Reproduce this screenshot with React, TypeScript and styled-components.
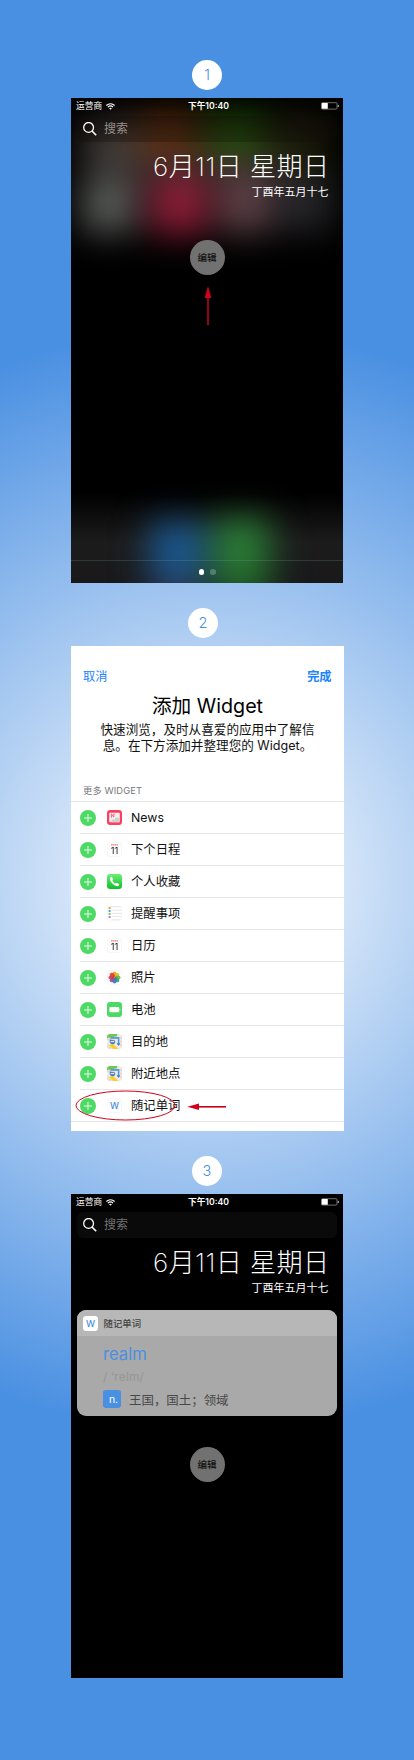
import React from "react";
import styled, { createGlobalStyle } from "styled-components";

const Global = createGlobalStyle`
  html, body { margin: 0; padding: 0; }
  body { font-family: Inter, "Noto Sans CJK SC", sans-serif; }
  * { box-sizing: border-box; }
  svg { display: block; }
`;

const Page = styled.main`
  width: 414px;
  height: 1760px;
  padding: 60px 0 0 71px;
  display: flex;
  flex-direction: column;
  align-items: flex-start;
  background: radial-gradient(circle 553px at 207px 880px, #fff 0, #4a90e2 100%);
`;

const Step = styled.div<{ $top?: number; $left?: number }>`
  width: 30px;
  height: 30px;
  flex: none;
  margin: ${(p) => p.$top ?? 0}px 0 8px ${(p) => p.$left ?? 121}px;
  border-radius: 50%;
  background: #fff;
  color: #4a90e2;
  font-size: 14.5px;
  font-weight: 300;
  line-height: 30px;
  text-align: center;
`;

const Phone = styled.section<{ $h?: number }>`
  position: relative;
  isolation: isolate;
  width: 272px;
  height: ${(p) => p.$h ?? 485}px;
  flex: none;
  display: flex;
  flex-direction: column;
  overflow: hidden;
  color: #fff;
  background: #000;
`;

const GlowLayer = styled.svg`
  position: absolute;
  inset: 0;
  z-index: -1;
`;

const StatusBar = styled.div`
  height: 18px;
  padding: 0 4px 2px 5px;
  display: grid;
  grid-template-columns: 1fr auto 1fr;
  align-items: center;
  font-size: 8.7px;
  line-height: 16px;
`;
const Carrier = styled.div`
  display: flex;
  align-items: center;
  gap: 4px;
`;
const Clock = styled.div`
  font-weight: 600;
  padding-left: 2px;
`;
const BatteryBox = styled.div`
  display: flex;
  justify-content: flex-end;
`;

const Search = styled.div<{ $clear?: boolean }>`
  height: 26px;
  margin: 0 6px;
  padding: 0 6px;
  border-radius: 6px;
  display: flex;
  align-items: center;
  gap: 7px;
  font-size: 12px;
  color: ${(p) => (p.$clear ? "#96908c" : "#727272")};
  background: ${(p) => (p.$clear ? "rgba(20,12,10,.3)" : "#0a0a0a")};
`;
const Placeholder = styled.span`
  line-height: 26px;
  height: 26px;
`;

const DateLine = styled.h1`
  margin: 7px 13.5px 0 0;
  height: 36px;
  line-height: 36px;
  text-align: right;
  font-size: 26.1px;
  letter-spacing: 0.4px;
  font-weight: 200;
  white-space: nowrap;
`;
const Lunar = styled.p`
  margin: -1px 14.5px 0 0;
  height: 16px;
  line-height: 17px;
  text-align: right;
  font-size: 11px;
`;

const Edit = styled.button<{ $top: number }>`
  width: 35px;
  height: 35px;
  flex: none;
  margin: ${(p) => p.$top}px 0 0 118.5px;
  padding: 0;
  border: 0;
  border-radius: 50%;
  background: #717171;
  color: #101010;
  font: 500 9.5px/34px Inter, "Noto Sans CJK SC", sans-serif;
`;
const UpArrow = styled.svg`
  flex: none;
  margin: 11px 0 0 133px;
`;
const Footer = styled.div`
  height: 23.5px;
  margin-top: auto;
  border-top: 1px solid rgba(140, 180, 170, 0.2);
  display: flex;
  justify-content: center;
  align-items: center;
  gap: 6px;
`;
const Dot = styled.i<{ $on?: boolean }>`
  width: 5.5px;
  height: 5.5px;
  border-radius: 50%;
  background: ${(p) => (p.$on ? "#fff" : "rgba(160,190,170,.4)")};
`;

const Sheet = styled.section`
  width: 273px;
  height: 485px;
  flex: none;
  overflow: hidden;
  background: #fff;
  color: #111;
`;
const Nav = styled.div`
  height: 44px;
  padding: 18px 12.5px 0 12px;
  display: flex;
  justify-content: space-between;
  line-height: 26px;
  font-size: 12.2px;
  color: #1a84fb;
`;
const Done = styled.span`
  font-weight: 600;
`;
const Title = styled.h2`
  margin: 0;
  height: 32px;
  line-height: 32px;
  font-size: 19.7px;
  font-weight: 400;
  text-align: center;
  color: #000;
`;
const Intro = styled.p`
  margin: 0;
  height: 60px;
  line-height: 16px;
  font-size: 12.6px;
  text-align: center;
  white-space: nowrap;
`;
const GroupName = styled.div`
  height: 20px;
  padding-left: 12px;
  line-height: 18px;
  font-size: 9.3px;
  letter-spacing: 0.1px;
  color: #77777b;
  border-bottom: 1px solid #e6e6e8;
`;
const List = styled.ul`
  list-style: none;
  margin: 0;
  padding: 0;
  border-bottom: 1px solid #e6e6e8;
`;
const Row = styled.li`
  height: 32px;
  margin-left: 9px;
  display: flex;
  align-items: center;
  border-bottom: 1px solid #e6e6e8;
  font-size: 12.35px;
  position: relative;
  &:last-child { border-bottom: 0; height: 31px; }
`;
const Plus = styled.svg`
  margin: 1px 11px 0 0;
`;
const RowIcon = styled.svg`
  margin-right: 9px;
`;
const Label = styled.span`
  line-height: 31px;
  height: 31px;
`;
const Mark = styled.svg`
  position: absolute;
  left: -5px;
  top: -1px;
  overflow: visible;
`;

const Card = styled.article`
  margin: 14px 6px 0;
  height: 106px;
  flex: none;
  overflow: hidden;
  border-radius: 9px;
  background: #a9a9a9;
`;
const CardHead = styled.header`
  height: 26px;
  padding-left: 6px;
  display: flex;
  align-items: center;
  gap: 5.5px;
  background: #b7b7b7;
  color: #444;
  font-size: 9.4px;
  font-weight: 500;
`;
const CardBody = styled.div`
  padding: 6px 0 0 26px;
`;
const Word = styled.div`
  height: 23px;
  line-height: 24px;
  font-size: 16.6px;
  color: #4a90e2;
`;
const Phonetic = styled.div`
  height: 25px;
  line-height: 24px;
  font-size: 12px;
  letter-spacing: 0.15px;
  color: #969696;
`;
const Meaning = styled.div`
  display: flex;
  align-items: center;
  gap: 8px;
  height: 18px;
  font-size: 12.45px;
  color: #484848;
`;
const Gloss = styled.span`
  height: 18px;
  line-height: 21px;
`;
const Pos = styled.span`
  width: 18px;
  height: 18px;
  padding-left: 3px;
  border-radius: 3px;
  background: #4a90e2;
  color: #fff;
  font-size: 10.5px;
  line-height: 19px;
  text-align: center;
`;

const Glow = () => (
  <GlowLayer width="272" height="485" viewBox="0 0 272 485">
    <defs>
      <filter
        id="soft"
        filterUnits="userSpaceOnUse"
        x="-80"
        y="-80"
        width="432"
        height="645"
        colorInterpolationFilters="sRGB"
      >
        <feGaussianBlur stdDeviation="18 17" />
      </filter>
      <linearGradient id="dock" x2="0" y2="1">
        <stop stopColor="#1c1c1c" stopOpacity="0" />
        <stop offset=".55" stopColor="#1c1c1c" />
        <stop offset="1" stopColor="#19191b" />
      </linearGradient>
    </defs>
    <rect y="395" width="272" height="90" fill="url(#dock)" />
    <g filter="url(#soft)">
      <rect x="14" y="26" width="54" height="44" fill="#48423f" />
      <rect x="68" y="18" width="60" height="36" fill="#65300c" />
      <rect x="134" y="18" width="62" height="36" fill="#205408" />
      <rect x="204" y="18" width="52" height="62" fill="#1c1c0a" />
      <rect x="60" y="54" width="150" height="28" fill="#3a2c29" />
      <rect x="12" y="78" width="52" height="56" fill="#5c5f5c" />
      <rect x="80" y="78" width="56" height="58" fill="#901e38" />
      <rect x="148" y="78" width="52" height="56" fill="#61444a" />
      <rect x="208" y="78" width="52" height="54" fill="#28282d" />
      <rect x="80" y="424" width="52" height="58" fill="#1a5a94" />
      <rect x="142" y="420" width="56" height="62" fill="#2a7e36" />
      <rect x="80" y="484" width="52" height="30" fill="#323956" />
      <rect x="142" y="482" width="56" height="30" fill="#1d4f21" />
    </g>
  </GlowLayer>
);

const Tile = ({ kind }: { kind: string }) => (
  <RowIcon width="15" height="15" viewBox="0 0 15 15">
    {kind === "news" && (
      <>
        <rect width="15" height="15" rx="3.2" fill="#fb3f5c" />
        <rect x="2.2" y="2.8" width="10.6" height="9.4" rx=".8" fill="#f6eef0" />
        <path d="M8 7.8H12.8V11.4a.8.8 0 0 1-.8.8H4.5V9.6H8Z" fill="#d2cdcf" />
        <path d="M4.6 7V4.2L6.9 7V4.2M4 4.2H4.8M6.4 4.2H7.5M4 7H5.1" stroke="#fb3f5c" strokeWidth=".75" fill="none" />
      </>
    )}
    {kind === "calendar" && (
      <>
        <rect x=".3" y=".3" width="14.4" height="14.4" rx="3.2" fill="#fff" stroke="#eee" strokeWidth=".6" />
        <path d="M4 2.8H11" stroke="#f27b74" strokeWidth="1.3" strokeDasharray="1.5 .3" />
        <text x="7.5" y="11.9" textAnchor="middle" fontSize="9.2" fill="#222">11</text>
      </>
    )}
    {kind === "phone" && (
      <>
        <defs>
          <linearGradient id="call" x2="0" y2="1">
            <stop stopColor="#6cf077" />
            <stop offset="1" stopColor="#0fbe2a" />
          </linearGradient>
        </defs>
        <rect width="15" height="15" rx="3.2" fill="url(#call)" />
        <path d="M3.2 3.6C3.8 2.7 4.6 2.5 5 3.1L6.1 4.9C6.4 5.4 5.5 6 5.5 6.4 5.6 7.4 7.6 9.5 8.7 9.6 9.2 9.6 9.7 8.7 10.2 9L12 10.1C12.6 10.6 12.1 11.5 11.2 12 7.8 13.3 1.9 7.2 3.2 3.6Z" fill="#fff" />
      </>
    )}
    {kind === "reminders" && (
      <>
        <rect x=".3" y=".3" width="14.4" height="14.4" rx="3.2" fill="#fff" stroke="#f1f1f1" strokeWidth=".6" />
        <path d="M4.8 .8H14M4.8 4.2H14.6M4.8 7.4H14.6M4.8 10.6H14.6M4.8 13.8H13.5" stroke="#ddd" strokeWidth=".7" />
        <rect x="1.6" y="1" width="2" height="2" fill="#f7992e" />
        <rect x="1.6" y="4" width="2" height="2" fill="#3fa6f2" />
        <rect x="1.6" y="7" width="2" height="2" fill="#6bd35d" />
        <rect x="1.6" y="10" width="2" height="2" fill="#c078e0" />
      </>
    )}
    {kind === "photos" && (
      <>
        <rect x=".3" y=".3" width="14.4" height="14.4" rx="3.2" fill="#fff" stroke="#eee" strokeWidth=".6" />
        {["#f5931c", "#cfca25", "#6fb53a", "#2f9c80", "#3a76c0", "#7f58aa", "#c93c5e", "#ea3626"].map((c, i) => (
          <ellipse key={c} cx="7.5" cy="4.4" rx="2.1" ry="2.9" fill={c} opacity=".9" transform={`rotate(${i * 45} 7.5 7.5)`} />
        ))}
      </>
    )}
    {kind === "battery" && (
      <>
        <rect width="15" height="15" rx="3" fill="#4cd964" />
        <rect x="2.4" y="4.9" width="9.8" height="5.3" rx=".8" fill="#fff" />
        <path d="M12.6 6.5a1.1 1.1 0 0 1 0 2.1Z" fill="#fff" />
      </>
    )}
    {kind === "maps" && (
      <>
        <rect width="15" height="15" rx="3.2" fill="#f1ebdf" />
        <path d="M3.2 0H10.2V2.2L0 4V3.2A3.2 3.2 0 0 1 3.2 0Z" fill="#74c54a" />
        <path d="M0 4.8 10.3 3.4V4.6L0 6Z" fill="#ded8cc" />
        <path d="M0 9.5 9.5 15H3.2A3.2 3.2 0 0 1 0 11.8Z" fill="#e9dfc5" />
        <path d="M3.6 10.2 6 9.8 11.3 15H6L2.6 11.6Z" fill="#fbcd30" />
        <path d="M2.6 5.4 8 6.4 8.2 8.8C7.4 10.6 3.8 10.6 2.8 8.6Z" fill="#287fe0" />
        <path d="M3.5 7.7H7.3" stroke="#fff" strokeWidth="1" />
        <path d="M3.6 6.3H7.2" stroke="#e95c5c" strokeWidth=".7" />
        <path d="M3.2 3.9H11.6V11" stroke="#469cf5" strokeWidth="1.6" fill="none" />
        <path d="M9.8 9.2 11.6 12 13.2 9.2Z" fill="#2c7ad8" />
        <path d="M14 3V13" stroke="#f3b5ad" strokeWidth=".9" strokeDasharray="2 1.6" />
      </>
    )}
    {kind === "word" && (
      <>
        <rect x=".3" y=".3" width="14.4" height="14.4" rx="3.2" fill="#fff" stroke="#eee" strokeWidth=".6" />
        <text x="7.5" y="10.6" textAnchor="middle" fontSize="9" fontWeight="500" fill="#4a90e2">W</text>
      </>
    )}
  </RowIcon>
);

const WordLogo = () => (
  <svg width="15" height="15" viewBox="0 0 15 15">
    <rect width="15" height="15" rx="3.2" fill="#fff" />
    <text x="7.5" y="10.7" textAnchor="middle" fontSize="9" fontWeight="500" fill="#4a90e2">W</text>
  </svg>
);

const Lockscreen = ({ glow }: { glow?: boolean }) => (
  <>
    {glow && <Glow />}
    <StatusBar>
      <Carrier>
        运营商
        <svg width="9" height="7" viewBox="0 0 9 7" fill="none" stroke="#fff" strokeWidth="1.15">
          <path d="M.4 2.5C2.7.2 6.3.2 8.6 2.5M1.9 4.1C3.4 2.7 5.6 2.7 7.1 4.1" />
          <path d="M4.5 6.7 3.1 5.3C3.9 4.6 5.1 4.6 5.9 5.3Z" fill="#fff" stroke="none" />
        </svg>
      </Carrier>
      <Clock>下午10:40</Clock>
      <BatteryBox>
        <svg width="18" height="8" viewBox="0 0 18 8">
          <rect x=".5" y=".7" width="15.5" height="6.4" rx="1" fill="none" stroke="#888" strokeWidth=".8" />
          <rect x=".8" y="1" width="6" height="5.8" rx=".5" fill="#fff" />
          <path d="M16.7 2.7h.4a.7.7 0 0 1 .7.7v1a.7.7 0 0 1-.7.7h-.4Z" fill="#bbb" />
        </svg>
      </BatteryBox>
    </StatusBar>
    <Search $clear={glow}>
      <svg width="14" height="14" viewBox="0 0 14 14" fill="none" stroke="#fff" strokeWidth="1.25">
        <circle cx="5.6" cy="5.4" r="4.9" />
        <path d="m9.1 9.1 4.1 4.1" strokeWidth="1.5" />
      </svg>
      <Placeholder>搜索</Placeholder>
    </Search>
    <DateLine>6月11日 星期日</DateLine>
    <Lunar>丁酉年五月十七</Lunar>
  </>
);

const rows = [
  ["news", "News"],
  ["calendar", "下个日程"],
  ["phone", "个人收藏"],
  ["reminders", "提醒事项"],
  ["calendar", "日历"],
  ["photos", "照片"],
  ["battery", "电池"],
  ["maps", "目的地"],
  ["maps", "附近地点"],
  ["word", "随记单词"],
];

export default function App() {
  return (
    <>
      <Global />
      <Page>
        <Step>1</Step>
        <Phone>
          <Lockscreen glow />
          <Edit $top={40}>编辑</Edit>
          <UpArrow width="8" height="40" viewBox="0 0 8 40">
            <path d="M4 10V39.2" stroke="#b3001b" strokeWidth="1.7" />
            <path d="M4 0 7.3 12H.7Z" fill="#d0021b" />
          </UpArrow>
          <Footer>
            <Dot $on />
            <Dot />
          </Footer>
        </Phone>

        <Step $top={25} $left={117}>2</Step>
        <Sheet>
          <Nav>
            <span>取消</span>
            <Done>完成</Done>
          </Nav>
          <Title>添加 Widget</Title>
          <Intro>
            快速浏览，及时从喜爱的应用中了解信
            <br />
            息。在下方添加并整理您的 Widget。
          </Intro>
          <GroupName>更多 WIDGET</GroupName>
          <List>
            {rows.map(([kind, label]) => (
              <Row key={label}>
                <Plus width="16" height="16" viewBox="0 0 16 16">
                  <circle cx="8" cy="8" r="8" fill="#4cd964" />
                  <path d="M8 3.9V12.1M3.9 8H12.1" stroke="#fff" strokeOpacity=".85" strokeWidth="1" />
                </Plus>
                <Tile kind={kind} />
                <Label>{label}</Label>
                {kind === "word" && (
                  <Mark width="152" height="32" viewBox="0 0 152 32" fill="none">
                    <ellipse cx="50.5" cy="16.5" rx="49.5" ry="14.5" stroke="#d0021b" strokeWidth="1" />
                    <path d="M123 17.8H151" stroke="#c4021b" strokeWidth="1.6" />
                    <path d="M112.3 17.8 124 14.5V21.1Z" fill="#d0021b" />
                  </Mark>
                )}
              </Row>
            ))}
          </List>
        </Sheet>

        <Step $top={25}>3</Step>
        <Phone $h={484}>
          <Lockscreen />
          <Card>
            <CardHead>
              <WordLogo />
              随记单词
            </CardHead>
            <CardBody>
              <Word>realm</Word>
              <Phonetic>/ ‘relm/</Phonetic>
              <Meaning>
                <Pos>n.</Pos>
                <Gloss>王国，国土；领域</Gloss>
              </Meaning>
            </CardBody>
          </Card>
          <Edit $top={31}>编辑</Edit>
        </Phone>
      </Page>
    </>
  );
}
